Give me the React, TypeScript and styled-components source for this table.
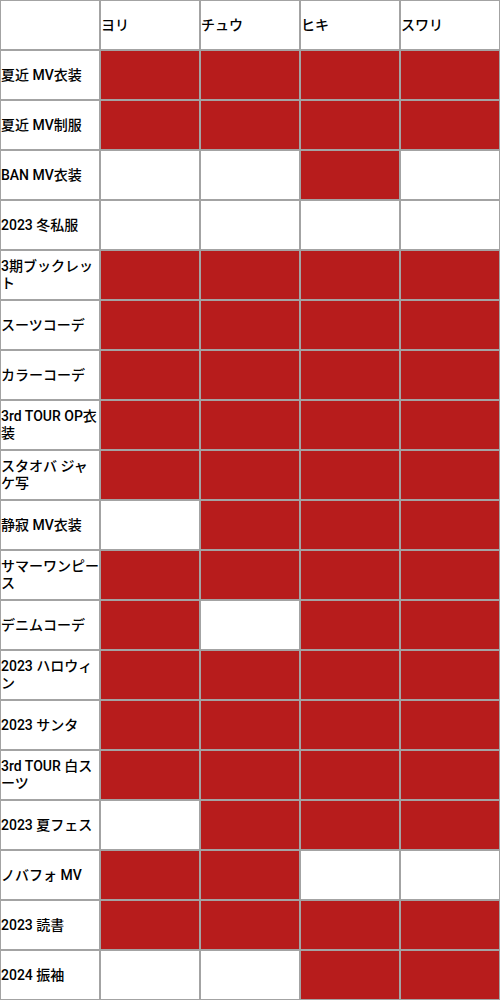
import React from "react";
import styled, { createGlobalStyle } from "styled-components";

const Global = createGlobalStyle`
  html, body { margin: 0; padding: 0; background: #ffffff; }
  body { font-family: Roboto, "Noto Sans CJK JP", sans-serif; }
`;

const Grid = styled.div`
  display: grid;
  grid-template-columns: repeat(5, 100px);
  grid-auto-rows: 50px;
  width: 500px;
`;

const Cell = styled.div<{ $on?: boolean }>`
  box-sizing: border-box;
  border: 1px solid #a3a3a3;
  background: ${(p) => (p.$on ? "#b71c1c" : "#ffffff")};
  display: flex;
  align-items: center;
  padding: 0;
  font-family: Roboto, "Noto Sans CJK JP", sans-serif;
  font-size: 14px;
  font-weight: 500;
  line-height: 17px;
  color: #000000;
  overflow: hidden;
  word-break: normal;
  line-break: anywhere;
`;

const members = ["ヨリ", "チュウ", "ヒキ", "スワリ"];

const rows: [string, number[]][] = [
  ["夏近 MV衣装", [1, 1, 1, 1]],
  ["夏近 MV制服", [1, 1, 1, 1]],
  ["BAN MV衣装", [0, 0, 1, 0]],
  ["2023 冬私服", [0, 0, 0, 0]],
  ["3期ブックレット", [1, 1, 1, 1]],
  ["スーツコーデ", [1, 1, 1, 1]],
  ["カラーコーデ", [1, 1, 1, 1]],
  ["3rd TOUR OP衣装", [1, 1, 1, 1]],
  ["スタオバ ジャケ写", [1, 1, 1, 1]],
  ["静寂 MV衣装", [0, 1, 1, 1]],
  ["サマーワンピース", [1, 1, 1, 1]],
  ["デニムコーデ", [1, 0, 1, 1]],
  ["2023 ハロウィン", [1, 1, 1, 1]],
  ["2023 サンタ", [1, 1, 1, 1]],
  ["3rd TOUR 白スーツ", [1, 1, 1, 1]],
  ["2023 夏フェス", [0, 1, 1, 1]],
  ["ノバフォ MV", [1, 1, 0, 0]],
  ["2023 読書", [1, 1, 1, 1]],
  ["2024 振袖", [0, 0, 1, 1]],
];

export default function App() {
  return (
    <>
      <Global />
      <Grid>
        <Cell />
        {members.map((m) => (
          <Cell key={m}>{m}</Cell>
        ))}
        {rows.map(([label, vals]) => (
          <React.Fragment key={label}>
            <Cell>{label}</Cell>
            {vals.map((v, i) => (
              <Cell key={i} $on={v === 1} />
            ))}
          </React.Fragment>
        ))}
      </Grid>
    </>
  );
}
